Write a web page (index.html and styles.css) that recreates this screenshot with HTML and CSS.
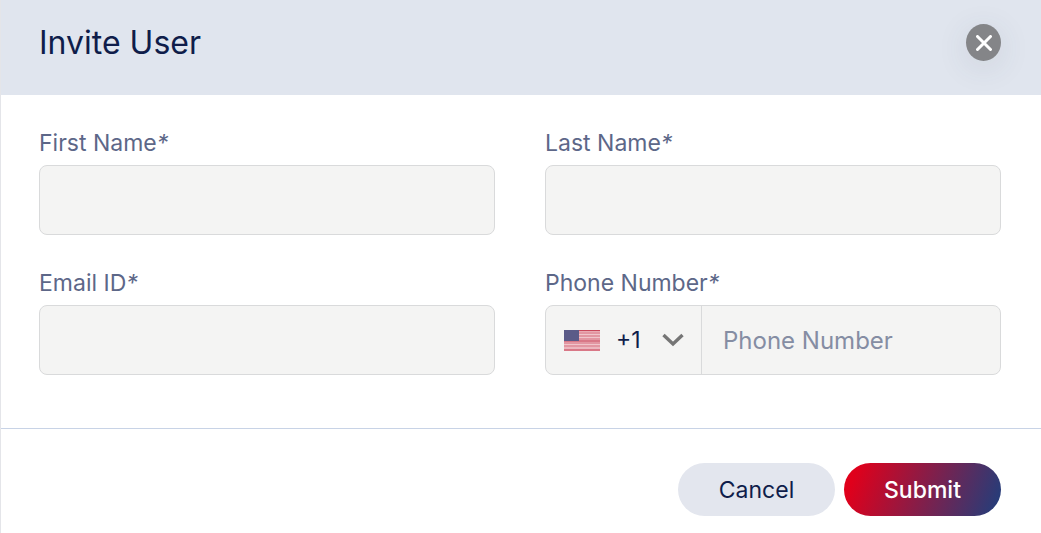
FILE: index.html
```html
<!DOCTYPE html>
<html lang="en">
<head>
  <meta charset="UTF-8" />
  <meta name="viewport" content="width=device-width, initial-scale=1" />
  <title>Invite User</title>
  <link rel="stylesheet" href="styles.css">
</head>
<body>
  <form class="modal">
    <header class="modal-header">
      <h1>Invite User</h1>
      <button type="button" class="close" aria-label="Close">
        <svg viewBox="0 0 16 16" width="16" height="16" fill="none" stroke="currentColor" stroke-width="3" stroke-linecap="round">
          <path d="M1.5 1.5l13 13M14.5 1.5l-13 13" />
        </svg>
      </button>
    </header>

    <div class="modal-body">
      <div class="field">
        <label for="firstName">First Name<span class="required">*</span></label>
        <input type="text" id="firstName" name="firstName" required />
      </div>
      <div class="field">
        <label for="lastName">Last Name<span class="required">*</span></label>
        <input type="text" id="lastName" name="lastName" required />
      </div>
      <div class="field">
        <label for="email">Email ID<span class="required">*</span></label>
        <input type="email" id="email" name="email" required />
      </div>
      <div class="field">
        <label for="phone">Phone Number<span class="required">*</span></label>
        <div class="phone">
          <div class="country">
            <svg class="flag" viewBox="0 0 36 21" width="36" height="21">
              <rect width="36" height="21" fill="#e9a9b2" />
              <path d="M0 3h36M0 6h36M0 9h36M0 13h36M0 16h36" stroke="#dc8391" stroke-width="1" />
              <path d="M0 .5h36M0 11h36M0 20h36" stroke="#c9495c" stroke-width="1.2" />
              <path d="M0 4.5h36M0 7.5h36M0 14.5h36M0 18h36" stroke="#f0c5cb" stroke-width="1" />
              <rect width="15" height="11" fill="#5b5b88" />
            </svg>
            <select name="countryCode" aria-label="Country code">
              <option value="1">+1</option>
              <option value="44">+44</option>
              <option value="91">+91</option>
            </select>
            <svg class="chevron" viewBox="0 0 22 14" width="22" height="14" fill="none" stroke="currentColor" stroke-width="3.4">
              <path d="M1.5 2l9.5 9 9.5-9" />
            </svg>
          </div>
          <input type="tel" id="phone" name="phone" placeholder="Phone Number" required />
        </div>
      </div>
    </div>

    <footer class="modal-footer">
      <button type="button" class="btn btn-cancel">Cancel</button>
      <button type="submit" class="btn btn-submit">Submit</button>
    </footer>
  </form>
</body>
</html>
```
FILE: styles.css
```css
* {
  box-sizing: border-box;
}
body {
  margin: 0;
  background: #fff;
  color: #0f1d4a;
  font-family: Inter, "Liberation Sans", sans-serif;
}
button, input, select {
  font: inherit;
  color: inherit;
}
.modal {
  border-left: 1px solid #e4e5e9;
}
.modal-header {
  display: flex;
  justify-content: space-between;
  align-items: flex-start;
  height: 95px;
  padding: 24px 40px 0 38px;
  background: #e0e5ee;
}
h1 {
  margin: 0;
  font-size: 32px;
  font-weight: 400;
  line-height: 37px;
}
.close {
  display: flex;
  align-items: center;
  justify-content: center;
  width: 35px;
  height: 37px;
  padding: 0;
  border: none;
  border-radius: 50%;
  background: #848588;
  color: #fff;
  box-shadow: 0 6px 32px rgba(60, 70, 90, 0.12);
  cursor: pointer;
}
.modal-body {
  display: grid;
  grid-template-columns: 1fr 1fr;
  gap: 33px 50px;
  padding: 33px 40px 53px 38px;
}
.field label {
  display: block;
  margin-bottom: 7px;
  color: #5d6788;
  font-size: 23px;
  line-height: 30px;
}
.required {
  font-style: italic;
}
.field input {
  display: block;
  width: 100%;
  height: 70px;
  padding: 0 21px;
  border: 1px solid #d9dadb;
  border-radius: 8px;
  background: #f4f4f3;
  font-size: 24px;
}
.phone {
  display: flex;
  border: 1px solid #d9dadb;
  border-radius: 8px;
  background: #f4f4f3;
}
.phone input {
  flex: 1;
  min-width: 0;
  height: 68px;
  border: none;
  background: none;
}
.phone input::placeholder {
  color: #858da3;
  opacity: 1;
}
.country {
  position: relative;
  display: flex;
  align-items: center;
  width: 156px;
  border-right: 1px solid #d9dadb;
}
.country svg {
  position: absolute;
  pointer-events: none;
}
.flag {
  left: 18px;
}
.chevron {
  right: 17px;
  color: #757575;
}
.country select {
  width: 100%;
  height: 68px;
  padding: 0 40px 0 70px;
  border: none;
  background: none;
  font-size: 23px;
  appearance: none;
}
.modal-footer {
  display: flex;
  justify-content: flex-end;
  gap: 9px;
  padding: 34px 40px 17px 38px;
  border-top: 1px solid #c8d3e6;
}
.btn {
  width: 157px;
  height: 53px;
  padding: 0;
  border: none;
  border-radius: 27px;
  font-size: 23px;
  cursor: pointer;
}
.btn-cancel {
  background: #e3e6ee;
}
.btn-submit {
  background: linear-gradient(110deg, #e0001b 8%, #283c78 95%);
  color: #fff;
  font-weight: 500;
}
```
